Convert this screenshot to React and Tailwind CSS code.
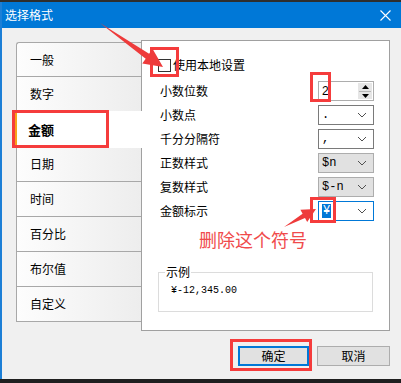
import React from "react";

const tabs = ["一般", "数字", "金额", "日期", "时间", "百分比", "布尔值", "自定义"];

const Chevron = () => (
  <svg width="10" height="6" viewBox="0 0 10 6" className="shrink-0">
    <path d="M1 1l4 4 4-4" fill="none" stroke="#505050" strokeWidth="1" />
  </svg>
);

const Dropdown = ({ value, variant = "white", children }) => {
  const styles = {
    white: "bg-white border-[#7a7a7a]",
    gray: "bg-[#e1e1e1] border-[#adadad]",
    focus: "bg-white border-[#0078d7]",
  };
  return (
    <div className={`w-[56px] h-[20px] border ${styles[variant]} flex items-center justify-between pl-[3px] pr-[6px]`}>
      <span className="font-['Liberation_Mono',monospace] text-[12px] leading-none">{children || value}</span>
      <Chevron />
    </div>
  );
};

const Row = ({ label, children }) => (
  <div className="flex items-center justify-between h-[20px]">
    <span className="text-[12px] leading-none">{label}</span>
    {children}
  </div>
);

const App = () => {
  return (
    <div className="relative w-[401px] h-[383px] bg-[#1f1f1f] overflow-hidden font-['Noto_Sans_CJK_SC','Noto_Sans',sans-serif] text-[#000]">
      <div className="h-[2px] bg-[#2e2e2e]" />
      <div className="h-[377px] flex flex-col border-l-2 border-[#1c7fd6] bg-[#f0f0f0]">
        {/* Title bar */}
        <div className="h-[26px] bg-[#0078d7] flex items-center justify-between pl-[3px] pr-[10px]">
          <span className="text-white text-[12px] leading-none">选择格式</span>
          <svg width="11" height="11" viewBox="0 0 11 11">
            <path d="M0.5 0.5l10 10M10.5 0.5l-10 10" stroke="white" strokeWidth="1.1" />
          </svg>
        </div>

        {/* Body */}
        <div className="flex-1 flex flex-col">
          <div className="flex">
            {/* Tab list */}
            <div className="ml-[14px] mt-[14px] w-[125px] flex flex-col">
              {tabs.map((t, i) =>
                t === "金额" ? (
                  <div
                    key={t}
                    className="relative z-10 -ml-[2px] -mr-[1px] -my-[1px] h-[37px] bg-white border-l-[3px] border-[#f7a21b] flex items-center pl-[11px] text-[13px] font-bold"
                  >
                    {t}
                  </div>
                ) : (
                  <div
                    key={t}
                    className={`h-[35px] border-l border-b border-[#a8a8a8] bg-gradient-to-r from-[#fdfdfd] to-[#ededed] flex items-center pl-[13px] text-[12px] ${
                      i === 0 ? "border-t rounded-tl-[3px]" : ""
                    }`}
                  >
                    {t}
                  </div>
                )
              )}
            </div>

            {/* Panel */}
            <div className="mt-[12px] w-[249px] h-[291px] border border-[#a0a0a0] bg-white flex flex-col pt-[17px]">
              <div className="flex items-center pl-[16px] h-[14px]">
                <div className="w-[13px] h-[13px] border border-[#333] bg-white" />
                <span className="ml-[2px] text-[12px] leading-none">使用本地设置</span>
              </div>

              <div className="mt-[9px] pl-[18px] pr-[15px] flex flex-col gap-[4px]">
                <Row label="小数位数">
                  <div className="w-[56px] h-[20px] border border-[#adadad] bg-white flex items-center justify-between pl-[3px] pr-[1px]">
                    <span className="text-[12px] leading-none font-['Liberation_Sans',sans-serif]">2</span>
                    <div className="w-[14px] h-[16px] bg-[#e6e6e6] flex flex-col items-center justify-center gap-[2px]">
                      <svg width="7" height="4" viewBox="0 0 7 4">
                        <path d="M3.5 0L7 4H0z" fill="#000" />
                      </svg>
                      <div className="w-[12px] h-px bg-[#b8b8b8]" />
                      <svg width="7" height="4" viewBox="0 0 7 4">
                        <path d="M0 0h7L3.5 4z" fill="#000" />
                      </svg>
                    </div>
                  </div>
                </Row>
                <Row label="小数点">
                  <Dropdown value="." />
                </Row>
                <Row label="千分分隔符">
                  <Dropdown value="," />
                </Row>
                <Row label="正数样式">
                  <Dropdown value="$n" variant="gray" />
                </Row>
                <Row label="复数样式">
                  <Dropdown value="$-n" variant="gray" />
                </Row>
                <Row label="金额标示">
                  <Dropdown variant="focus">
                    <span className="bg-[#0078d7] text-white px-px">¥</span>
                  </Dropdown>
                </Row>
              </div>

              <div className="mt-[8px] ml-[57px] text-[18px] leading-[20px] text-[#f04b4b]">删除这个符号</div>

              <fieldset className="mt-[17px] ml-[16px] w-[215px] h-[46px] border border-[#dcdcdc] px-[6px]">
                <legend className="text-[12px] leading-none px-px">示例</legend>
                <div className="pl-[6px] pt-[8px] font-['Liberation_Mono',monospace] text-[10px] leading-none">¥-12,345.00</div>
              </fieldset>
            </div>
          </div>

          {/* Buttons */}
          <div className="mt-[15px] flex justify-end gap-[8px] pr-[11px]">
            <button className="w-[71px] h-[20px] border-2 border-[#0078d7] bg-[#e1e1e1] text-[12px] leading-none">确定</button>
            <button className="w-[73px] h-[20px] border border-[#adadad] bg-[#e1e1e1] text-[12px] leading-none">取消</button>
          </div>
        </div>
      </div>

      {/* Annotations */}
      <div className="absolute left-[150px] top-[47px] w-[29px] h-[30px] border-[3px] border-[#f53c3c]" />
      <div className="absolute left-[12px] top-[110px] w-[97px] h-[38px] border-[3px] border-[#f53c3c] z-20" />
      <div className="absolute left-[310px] top-[72px] w-[21px] h-[30px] border-[3px] border-[#f53c3c]" />
      <div className="absolute left-[310px] top-[197px] w-[26px] h-[26px] border-[3px] border-[#f53c3c]" />
      <div className="absolute left-[230px] top-[339px] w-[82px] h-[32px] border-[3px] border-[#f53c3c]" />
      <svg className="absolute left-0 top-0 pointer-events-none z-30" width="401" height="383" viewBox="0 0 401 383">
        <polygon points="100,23 149.1,53.7 152.5,48.8 163,67 142.3,63.6 145.7,58.7" fill="#ee3b3b" />
        <polygon points="284,227 302.6,213.7 300.4,209.8 316,209 307.2,222 305,218.1" fill="#ee3b3b" />
      </svg>
    </div>
  );
};

export default App;
